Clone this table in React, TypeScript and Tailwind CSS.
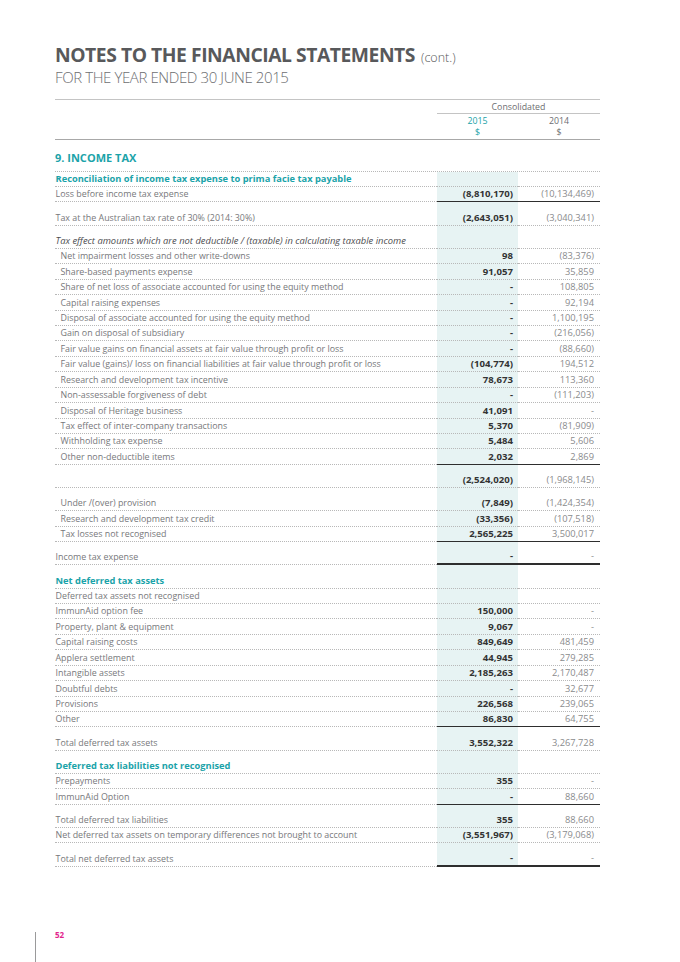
type Row = {
  label?: string;
  a?: string;
  b?: string;
  indent?: boolean;
  kind?: 'head' | 'italic';
  tall?: boolean;
  rule?: 'dark' | 'thick';
};

const rows: Row[] = [
  { label: 'Reconciliation of income tax expense to prima facie tax payable', kind: 'head' },
  { label: 'Loss before income tax expense', a: '(8,810,170)', b: '(10,134,469)', rule: 'dark' },
  { label: 'Tax at the Australian tax rate of 30% (2014: 30%)', a: '(2,643,051)', b: '(3,040,341)', tall: true },
  { label: 'Tax effect amounts which are not deductible / (taxable) in calculating taxable income', kind: 'italic', tall: true },
  { label: 'Net impairment losses and other write-downs', a: '98', b: '(83,376)', indent: true },
  { label: 'Share-based payments expense', a: '91,057', b: '35,859', indent: true },
  { label: 'Share of net loss of associate accounted for using the equity method', a: '-', b: '108,805', indent: true },
  { label: 'Capital raising expenses', a: '-', b: '92,194', indent: true },
  { label: 'Disposal of associate accounted for using the equity method', a: '-', b: '1,100,195', indent: true },
  { label: 'Gain on disposal of subsidiary', a: '-', b: '(216,056)', indent: true },
  { label: 'Fair value gains on financial assets at fair value through profit or loss', a: '-', b: '(88,660)', indent: true },
  { label: 'Fair value (gains)/ loss on financial liabilities at fair value through profit or loss', a: '(104,774)', b: '194,512', indent: true },
  { label: 'Research and development tax incentive', a: '78,673', b: '113,360', indent: true },
  { label: 'Non-assessable forgiveness of debt', a: '-', b: '(111,203)', indent: true },
  { label: 'Disposal of Heritage business', a: '41,091', b: '-', indent: true },
  { label: 'Tax effect of inter-company transactions', a: '5,370', b: '(81,909)', indent: true },
  { label: 'Withholding tax expense', a: '5,484', b: '5,606', indent: true },
  { label: 'Other non-deductible items', a: '2,032', b: '2,869', indent: true, rule: 'dark' },
  { label: '', a: '(2,524,020)', b: '(1,968,145)', tall: true },
  { label: 'Under /(over) provision', a: '(7,849)', b: '(1,424,354)', indent: true, tall: true },
  { label: 'Research and development tax credit', a: '(33,356)', b: '(107,518)', indent: true },
  { label: 'Tax losses not recognised', a: '2,565,225', b: '3,500,017', indent: true, rule: 'dark' },
  { label: 'Income tax expense', a: '-', b: '-', tall: true, rule: 'thick' },
  { label: 'Net deferred tax assets', kind: 'head', tall: true },
  { label: 'Deferred tax assets not recognised' },
  { label: 'ImmunAid option fee', a: '150,000', b: '-' },
  { label: 'Property, plant & equipment', a: '9,067', b: '-' },
  { label: 'Capital raising costs', a: '849,649', b: '481,459' },
  { label: 'Applera settlement', a: '44,945', b: '279,285' },
  { label: 'Intangible assets', a: '2,185,263', b: '2,170,487' },
  { label: 'Doubtful debts', a: '-', b: '32,677' },
  { label: 'Provisions', a: '226,568', b: '239,065' },
  { label: 'Other', a: '86,830', b: '64,755', rule: 'dark' },
  { label: 'Total deferred tax assets', a: '3,552,322', b: '3,267,728', tall: true },
  { label: 'Deferred tax liabilities not recognised', kind: 'head', tall: true },
  { label: 'Prepayments', a: '355', b: '-' },
  { label: 'ImmunAid Option', a: '-', b: '88,660', rule: 'dark' },
  { label: 'Total deferred tax liabilities', a: '355', b: '88,660', tall: true },
  { label: 'Net deferred tax assets on temporary differences not brought to account', a: '(3,551,967)', b: '(3,179,068)' },
  { label: 'Total net deferred tax assets', a: '-', b: '-', tall: true, rule: 'thick' },
];

// bottom rule under each cell
function Rule({ kind }: { kind?: 'dark' | 'thick' }) {
  if (kind === 'thick') return <div className="h-[2px] w-full bg-[#2e2e2e] shrink-0" />;
  if (kind === 'dark') return <div className="h-[1px] w-full bg-[#2e2e2e] shrink-0" />;
  return <div className="h-0 border-t border-dotted border-[#b8b8b8] shrink-0" />;
}

function TableRow({ row }: { row: Row }) {
  const height = row.tall ? 'h-[23.2px]' : 'h-[15.45px]';

  let labelCls = 'text-[8.9px] text-[#77787b]';
  if (row.kind === 'head') labelCls = 'text-[9.3px] font-bold text-[#1ba3a9]';
  if (row.kind === 'italic') labelCls = 'text-[9.4px] italic text-[#4d4d4f]';

  return (
    <div className={`flex ${height}`}>
      <div className="flex-1 flex flex-col">
        <div
          className={`flex-1 flex items-end pb-[2px] whitespace-nowrap leading-[11px] ${row.indent ? 'pl-[5.5px]' : 'pl-[0.5px]'} ${labelCls}`}
        >
          {row.label}
        </div>
        <Rule />
      </div>
      <div className="w-[81px] bg-[#e7f3f3] flex flex-col">
        <div className="flex-1 flex items-end justify-end pr-[5px] pb-[2px] leading-[11px] text-[9.6px] font-bold text-[#333333]">
          {row.a}
        </div>
        <Rule kind={row.rule} />
      </div>
      <div className="w-[82px] flex flex-col">
        <div className="flex-1 flex items-end justify-end pr-[6px] pb-[2px] leading-[11px] text-[9.3px] text-[#8a8b8d]">
          {row.b}
        </div>
        <Rule kind={row.rule} />
      </div>
    </div>
  );
}

export default function App() {
  return (
    <div className="w-[680px] h-[962px] bg-white relative overflow-hidden font-['Open_Sans',_'Liberation_Sans',_sans-serif]">
      <div className="pl-[55px] w-[600px] pt-[45px]">
        {/* Title */}
        <div className="flex items-baseline gap-[6px] text-[#58595b] leading-[20px]">
          <span className="text-[19.3px] font-bold tracking-[-0.45px]">NOTES TO THE FINANCIAL STATEMENTS</span>
          <span className="text-[12.5px] font-light">(cont.)</span>
        </div>
        <div className="mt-[1px] text-[15px] font-light text-[#6d6e71] leading-[16px] tracking-[-0.4px]">
          FOR THE YEAR ENDED 30 JUNE 2015
        </div>

        <div className="mt-[14px] border-t border-solid border-[#c4c4c4]" />

        {/* Column header */}
        <div className="flex">
          <div className="flex-1" />
          <div className="w-[163px]">
            <div className="h-[14px] flex items-end justify-center pb-[1px] text-[8.8px] text-[#6d6e71] leading-[10px] border-b border-solid border-[#c4c4c4]">
              Consolidated
            </div>
            <div className="flex text-[8.8px] leading-[10.5px] pt-[2px]">
              <div className="w-[81px] text-center text-[#1ba3a9]">
                <div>2015</div>
                <div>$</div>
              </div>
              <div className="w-[82px] text-center text-[#6d6e71]">
                <div>2014</div>
                <div>$</div>
              </div>
            </div>
          </div>
        </div>
        <div className="mt-[2px] border-t border-solid border-[#a8a8a8]" />

        {/* Section title */}
        <div className="h-[31.5px] flex items-end pb-[7.5px] border-b border-dotted border-[#b8b8b8] text-[11px] font-bold text-[#1ba3a9] leading-[11px]">
          9. INCOME TAX
        </div>

        {rows.map((row, i) => (
          <TableRow key={i} row={row} />
        ))}
      </div>

      {/* Page footer */}
      <div className="absolute left-[35px] top-[932px] h-[30px] border-l border-solid border-[#9a9a9b]" />
      <div className="absolute left-[55px] top-[931px] text-[8px] font-bold text-[#e2238c] leading-none">52</div>
    </div>
  );
}
